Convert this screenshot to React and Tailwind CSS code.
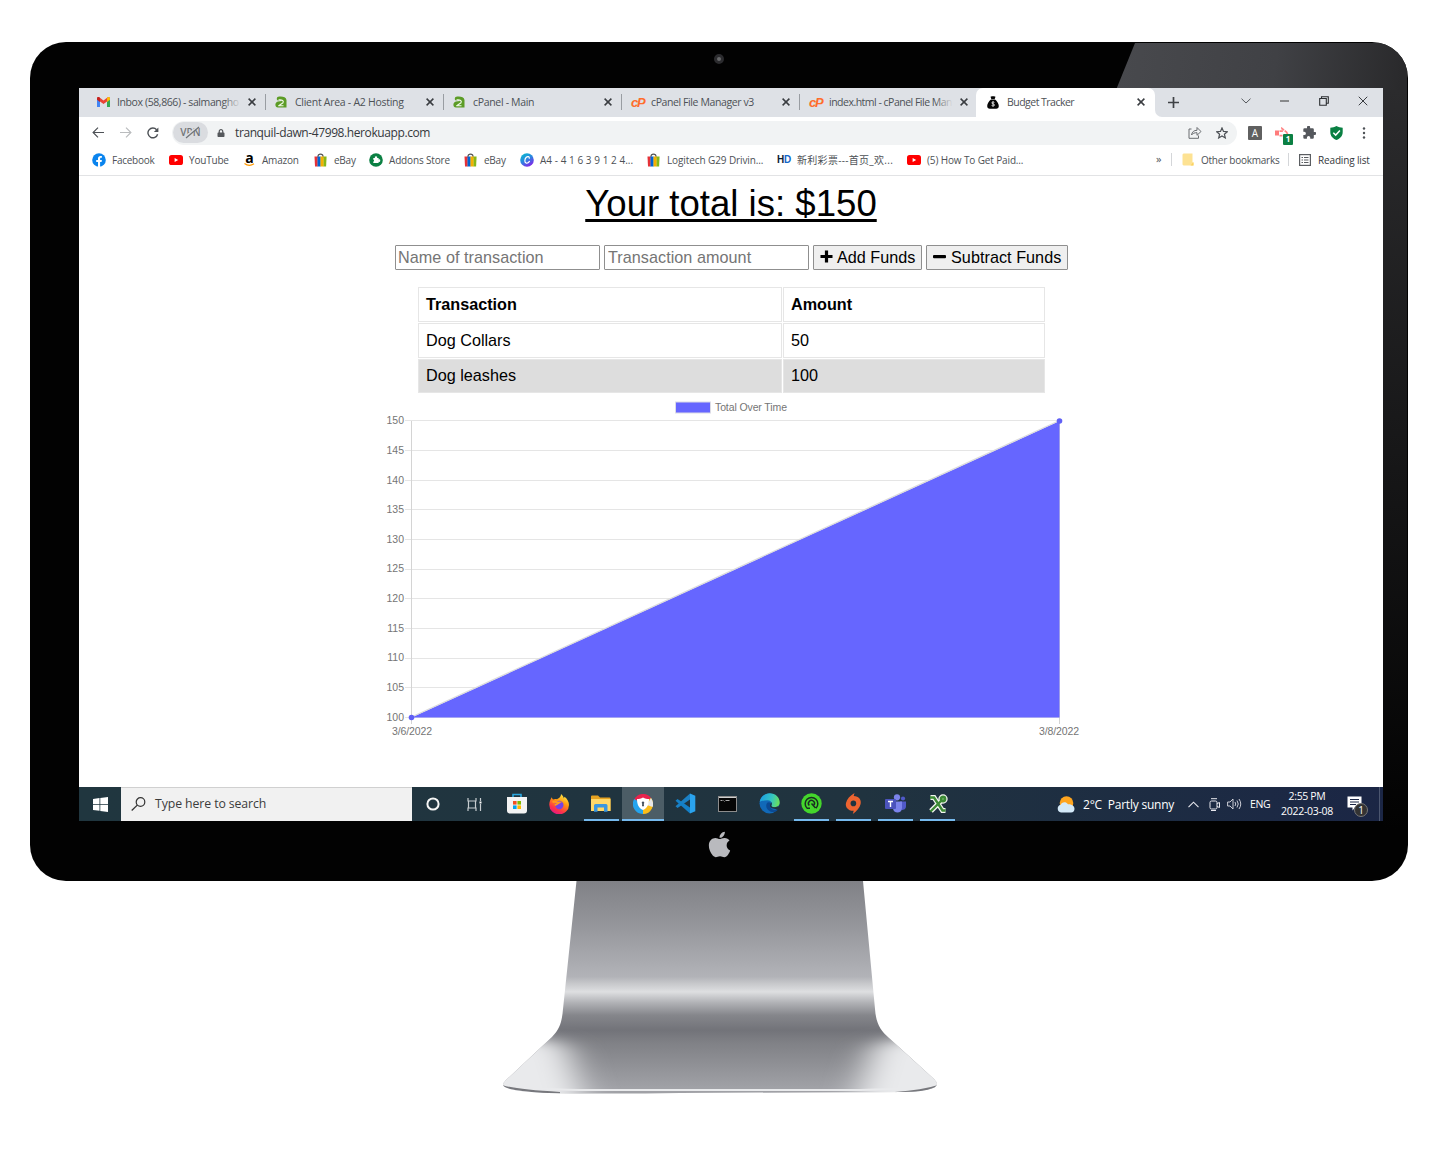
import React from "react";
import { FaApple, FaLock } from "react-icons/fa";

const ui = "font-['Open_Sans','Noto_Sans_CJK_SC',sans-serif]";

/* ---------- favicons ---------- */
const Gmail = () => (
  <svg width="13" height="10" viewBox="0 0 13 10">
    <path d="M0 1.3V10h3V4z" fill="#4285f4" />
    <path d="M13 1.3V10h-3V4z" fill="#34a853" />
    <path d="M0 1.5C0 0 1.6-.4 2.6.5L6.5 3.6 10.4.5C11.4-.4 13 0 13 1.5L10 4.4 6.5 7 3 4.4z" fill="#ea4335" />
    <path d="M10 1l.9-.7c1-.7 2.1 0 2.1 1.2v1.2l-3 2.2z" fill="#fbbc04" />
    <path d="M3 1L2.1.3C1.1-.4 0 .3 0 1.5v1.2l3 2.2z" fill="#c5221f" />
  </svg>
);
const A2 = () => (
  <svg width="12" height="13" viewBox="0 0 12 13">
    <path d="M2.5 1C6 0 11 .5 11.5 4v7.5H3C-.5 11.5-.5 6 3 5.4L7 5c0-1.4-2-1.3-4.2-.6C1.500 4 1.500 2 2.500 1z" fill="#5c9c26" />
    <path d="M3.300 10L8 6.800C9 5 7.500 3.300 3.600 3.900M3.300 9.800h5.200" fill="none" stroke="#eef7e4" strokeWidth="1.100" />
  </svg>
);
const Cp = () => (
  <span className="font-['Liberation_Sans',sans-serif] text-[13px] font-bold italic leading-none tracking-[-1.2px] text-[#ff6c2c]">cP</span>
);
const MoneyBag = () => (
  <svg width="12" height="13" viewBox="0 0 12 13">
    <path d="M3.500.7L5 .2h2L8.500.7 7.700 3H4.300zM4 3.400h4c2 1.600 3.800 4 3.800 6.600 0 1.900-1 2.700-2.600 2.700H2.800C1.200 12.700.2 11.900.2 10 .2 7.400 2 5 4 3.400z" fill="#050505" />
    <path d="M7.400 6.400c-.8-.7-2.600-.5-2.600.5C4.800 8.200 7.500 7.600 7.500 9c0 1.200-2 1.200-2.900.5M6 5.300v5.200" stroke="#fff" strokeWidth=".8" fill="none" />
  </svg>
);
const Facebook = () => (
  <svg width="14" height="14" viewBox="0 0 14 14">
    <circle cx="7" cy="7" r="6.800" fill="#0a84ee" />
    <path d="M6 14V9H4.200V7H6V5.600C6 3.800 7 2.900 8.500 2.900l1.400.1v1.700h-.8c-.8 0-1 .5-1 1V7h1.800l-.3 2H8.100v5z" fill="#fff" />
  </svg>
);
const YouTube = () => (
  <svg width="14" height="10" viewBox="0 0 14 10">
    <rect width="14" height="10" rx="2.600" fill="#f00" />
    <path d="M5.600 2.900v4.200L9.200 5z" fill="#fff" />
  </svg>
);
const Bag = () => (
  <svg width="13" height="14" viewBox="0 0 13 14">
    <path d="M4 5V3.200C4 .4 9 .4 9 3.200V5" stroke="#555" strokeWidth="1.100" fill="none" />
    <path d="M.5 3.500h3.200V13.500H1z" fill="#e53238" />
    <path d="M3.500 3.500h3.200v10H3.500z" fill="#0064d2" />
    <path d="M6.500 3.500h3.300v10H6.500z" fill="#f5af02" />
    <path d="M9.600 3.500h3l-.5 10H9.600z" fill="#86b817" />
  </svg>
);
const Addons = () => (
  <svg width="14" height="14" viewBox="0 0 14 14">
    <circle cx="7" cy="7" r="6.800" fill="#0b8043" />
    <path d="M4.300 5h1.600a1.200 1.200 0 1 1 2.200 0h1.500v1.500a1.200 1.200 0 1 1 0 2.200v1.300H4.300V8.700a1.200 1.200 0 0 0 0-2.200z" fill="#fff" />
  </svg>
);
const Canva = () => (
  <svg width="14" height="14" viewBox="0 0 14 14">
    <defs>
      <linearGradient id="canva" x1="0" y1="0" x2=".6" y2="1">
        <stop offset="0" stopColor="#00c4cc" />
        <stop offset=".55" stopColor="#2b84e0" />
        <stop offset="1" stopColor="#7d2ae8" />
      </linearGradient>
    </defs>
    <circle cx="7" cy="7" r="6.800" fill="url(#canva)" />
    <path d="M9.300 5.200C9.500 3.500 7.700 3 6.300 4.300 4.600 5.900 4.300 9.300 6 10c1.200.5 2.600-.4 3.400-1.600" fill="none" stroke="#fff" strokeWidth="1.200" strokeLinecap="round" />
  </svg>
);
const AmazonIcon = () => (
  <span className="flex flex-col items-center">
    <span className="h-[9px] text-[14px] font-bold leading-[7px] text-black">a</span>
    <svg width="11" height="3" viewBox="0 0 11 3"><path d="M.5.5C3.500 2.700 7 2.700 10 .8" stroke="#f90" strokeWidth="1.200" fill="none" /></svg>
  </span>
);
const HD = () => (
  <span className="font-['Liberation_Sans',sans-serif] text-[10px] font-bold leading-none tracking-[-0.2px] text-[#0b1c33]">
    H<span className="text-[#1466c8]">D</span>
  </span>
);

const Cross = ({ s = 8, w = 1.5 }) => (
  <svg width={s} height={s} viewBox="0 0 8 8"><path d="M.6.6l6.800 6.800M7.400.6L.6 7.400" stroke="#3a3d41" strokeWidth={w} /></svg>
);

/* ---------- browser chrome ---------- */
function Tab({ icon, label, text, fade, last }) {
  return (
    <div className="flex h-[29px] w-[178px] shrink-0 items-center pb-[1px] pl-[9px]">
      <span className="flex w-[20px] shrink-0 items-center">{icon}</span>
      <span className="relative w-[124px] shrink-0 whitespace-nowrap">
        <span className={`block text-[10.5px] leading-[16px] text-[#4d5156] ${text}`}>{label}</span>
        {fade && <span className="absolute right-0 top-0 h-4 w-[18px] bg-gradient-to-r from-[#dee1e6]/0 to-[#dee1e6]" />}
      </span>
      <span className="ml-[7px] flex w-[8px] shrink-0"><Cross /></span>
      {!last && <span className="ml-[9px] h-4 w-px shrink-0 bg-[#999da2]" />}
    </div>
  );
}

function Tabs() {
  return (
    <div className="flex h-[29px] bg-[#dee1e6]">
      <div className="w-[9px] shrink-0" />
      <Tab icon={<Gmail />} label="Inbox (58,866) - salmangho" text="tracking-[-0.4px]" fade />
      <Tab icon={<A2 />} label="Client Area - A2 Hosting" text="tracking-[-0.27px]" />
      <Tab icon={<A2 />} label="cPanel - Main" text="tracking-[-0.32px]" />
      <Tab icon={<Cp />} label="cPanel File Manager v3" text="tracking-[-0.4px]" />
      <Tab icon={<Cp />} label="index.html - cPanel File Man" text="tracking-[-0.5px]" fade last />
      <div className="-ml-[2px] flex h-[29px] w-[179px] shrink-0 items-center rounded-t-[7px] bg-white pb-[1px] pl-[11px]">
        <MoneyBag />
        <span className="ml-[8px] w-[130px] shrink-0 text-[10.5px] leading-[16px] tracking-[-0.5px] text-[#4d5156]"><span className="tracking-[-0.52px]">Budget Tracker</span></span>
        <Cross />
      </div>
      <div className="flex flex-1 bg-white">
        <div className="flex flex-1 items-center rounded-bl-[7px] bg-[#dee1e6] pl-[13px]">
          <svg width="11" height="11" viewBox="0 0 11 11"><path d="M5.500 0v11M0 5.500h11" stroke="#3f4246" strokeWidth="1.700" /></svg>
          <div className="mb-[4px] ml-[62px] flex items-center">
            <svg width="10" height="6" viewBox="0 0 10 6"><path d="M.5.7L5 5 9.500.7" stroke="#55585c" fill="none" /></svg>
            <svg className="ml-[29px]" width="9" height="2"><path d="M0 1h9" stroke="#333" /></svg>
            <svg className="ml-[30px]" width="10" height="10" viewBox="0 0 10 10"><path d="M.7 2.500h6.600v6.800H.7zM2.500 2.300V.7h6.800v6.600H7.500" stroke="#2b2d30" strokeWidth="1.100" fill="none" /></svg>
            <span className="ml-[29px] flex"><Cross s={10} w={0.8} /></span>
          </div>
        </div>
      </div>
    </div>
  );
}

function Toolbar() {
  return (
    <div className="flex h-[31px] items-center bg-white pl-[13px]">
      <svg width="12" height="11" viewBox="0 0 12 11"><path d="M12 5.500H1.200M6 .6L1.100 5.500 6 10.400" stroke="#4d5156" strokeWidth="1.200" fill="none" /></svg>
      <svg className="ml-[16px]" width="12" height="11" viewBox="0 0 12 11"><path d="M0 5.500h10.800M6 .6l4.900 4.900L6 10.400" stroke="#babcbe" strokeWidth="1.200" fill="none" /></svg>
      <svg className="ml-[15px]" width="12" height="12" viewBox="0 0 12 12"><path d="M10.600 7.200A4.900 4.900 0 1 1 9.600 2.700" stroke="#4d5156" strokeWidth="1.400" fill="none" /><path d="M11.400.4v4.500H6.900z" fill="#4d5156" /></svg>
      <div className="ml-[13px] flex h-[24px] w-[1065px] items-center rounded-full bg-[#f1f3f4]">
        <span className="relative ml-[1px] flex h-[21px] w-[35px] items-center justify-center rounded-full bg-[#dadce0] text-[10px] font-semibold tracking-[0.1px] text-[#707478]">
          VPN
          <svg className="absolute left-[9px] top-[3px]" width="18" height="14"><path d="M3 12L16 1.500" stroke="#dadce0" strokeWidth="2" /><path d="M4 13L17 2" stroke="#707478" strokeWidth="1.200" /></svg>
        </span>
        <FaLock className="ml-[9px]" size={8} color="#55585c" />
        <span className="ml-[10px] w-[953px] text-[12px] leading-4 tracking-[-0.4px] text-[#35383c]">tranquil-dawn-47998.herokuapp.com</span>
        <svg className="shrink-0" width="14" height="13" viewBox="0 0 14 13"><path d="M3.500 3H1v9.300h9.500V9.500M3.500 9C4 5.800 6 4.300 9 4.300V1.500l4 4-4 3.800V6.700C6.500 6.700 4.800 7.200 3.500 9z" stroke="#6a6d71" fill="none" /></svg>
        <svg className="ml-[14px] shrink-0" width="12" height="12" viewBox="0 0 12 12"><path d="M6 .9l1.500 3.500 3.800.3-2.900 2.500.9 3.700L6 8.900 2.700 10.900l.9-3.700L.7 4.700l3.800-.3z" stroke="#4d5156" strokeWidth="1.200" fill="none" /></svg>
      </div>
      <span className="ml-[11px] flex h-[14px] w-[14px] items-center justify-center rounded-[1px] bg-[#606060] text-[10px] leading-none text-white">A</span>
      <span className="relative ml-[13px] h-[16px] w-[19px]">
        <svg className="absolute left-0 top-[2px]" width="15" height="13" viewBox="0 0 15 13"><path d="M0 3.500h4v5H0z" fill="#ff7b7b" /><path d="M4.500 4.200h2.500V1.500l6 4.800-4.500 3.500M4.500 8.600h3" fill="none" stroke="#ff8585" strokeWidth="1.700" strokeDasharray="3.500 .8" /></svg>
        <span className="absolute left-[8px] top-[9px] flex h-[11px] w-[10px] items-center justify-center rounded-[1px] bg-[#0b8043] text-[8px] font-bold leading-none text-white">1</span>
      </span>
      <svg className="ml-[9px]" width="13" height="13" viewBox="1.500 1.500 21 21"><path d="M20.500 11H19V7a2 2 0 0 0-2-2h-4V3.500a2.500 2.500 0 0 0-5 0V5H4a2 2 0 0 0-2 2v3.800h1.500a2.700 2.700 0 0 1 0 5.400H2V20a2 2 0 0 0 2 2h3.800v-1.500a2.700 2.700 0 0 1 5.400 0V22H17a2 2 0 0 0 2-2v-4h1.500a2.500 2.500 0 0 0 0-5z" fill="#55585d" /></svg>
      <svg className="ml-[14px]" width="13" height="14" viewBox="0 0 13 14"><path d="M6.500 0c2 1.200 4 1.600 6.200 1.700V6c0 4-2.500 6.500-6.200 8C2.800 12.500.3 10 .3 6V1.700C2.500 1.600 4.500 1.200 6.500 0z" fill="#0a8043" /><path d="M3.300 6.700l2.400 2.400 4.200-4.500" stroke="#fff" strokeWidth="1.500" fill="none" /></svg>
      <svg className="ml-[19px]" width="4" height="12"><g fill="#4d5156"><circle cx="2" cy="1.500" r="1.200" /><circle cx="2" cy="6" r="1.200" /><circle cx="2" cy="10.500" r="1.200" /></g></svg>
    </div>
  );
}

function Bookmark({ icon, label, w, gap = "w-[20px]", text = "tracking-[-0.25px]" }) {
  return (
    <div className={`flex shrink-0 items-center ${w}`}>
      <span className={`flex shrink-0 items-center ${gap}`}>{icon}</span>
      <span className={`whitespace-nowrap text-[10px] leading-[14px] text-[#4d5156] ${text}`}>{label}</span>
    </div>
  );
}

function Bookmarks() {
  return (
    <div className="flex h-[28px] items-center border-b border-[#e2e3e5] bg-white pb-[4px] pl-[13px]">
      <Bookmark icon={<Facebook />} label="Facebook" w="w-[77px]" text="tracking-[-0.25px]" />
      <Bookmark icon={<YouTube />} label="YouTube" w="w-[75px]" text="tracking-[-0.2px]" />
      <Bookmark icon={<AmazonIcon />} label="Amazon" w="w-[70px]" gap="w-[18px]" text="tracking-[-0.2px]" />
      <Bookmark icon={<Bag />} label="eBay" w="w-[55px]" />
      <Bookmark icon={<Addons />} label="Addons Store" w="w-[95px]" text="tracking-[-0.16px]" />
      <Bookmark icon={<Bag />} label="eBay" w="w-[56px]" />
      <Bookmark icon={<Canva />} label="A4 - 4 1 6 3 9 1 2 4..." w="w-[127px]" text="tracking-[0.04px]" />
      <Bookmark icon={<Bag />} label="Logitech G29 Drivin..." w="w-[130px]" text="tracking-[-0.1px]" />
      <Bookmark icon={<HD />} label="新利彩票---首页_欢..." w="w-[130px]" text="tracking-[0.3px]" />
      <Bookmark icon={<YouTube />} label="(5) How To Get Paid..." w="w-[249px]" text="tracking-[-0.13px]" />
      <span className="w-[15px] pb-[2px] text-[11px] leading-none text-[#4d5156]">»</span>
      <span className="h-[13px] w-px bg-[#d4d6d9]" />
      <svg className="ml-[10px]" width="12" height="13" viewBox="0 0 12 13"><path d="M.5 1.500L1.500.500h9V9l1 1v2.500H1.500L.5 11.500z" fill="#fde293" /><path d="M11.500 9v3.500H8.500z" fill="#fbd25f" /></svg>
      <span className="ml-[7px] w-[87px] whitespace-nowrap pt-[1px] text-[10px] leading-[14px] tracking-[-0.24px] text-[#4d5156]">Other bookmarks</span>
      <span className="h-[13px] w-px bg-[#d4d6d9]" />
      <svg className="ml-[10px]" width="12" height="12" viewBox="0 0 12 12"><rect x=".6" y=".6" width="10.800" height="10.800" fill="none" stroke="#5a5d61" strokeWidth="1.200" /><path d="M2.500 3.500H4M5 3.500h4.500M2.500 6H4M5 6h4.500M2.500 8.500H4M5 8.500h4.500" stroke="#5a5d61" /></svg>
      <span className="ml-[7px] whitespace-nowrap pt-[1px] text-[10px] leading-[14px] tracking-[-0.15px] text-[#35383c]">Reading list</span>
    </div>
  );
}

/* ---------- budget tracker page ---------- */
const ticks = [150, 145, 140, 135, 130, 125, 120, 115, 110, 105, 100];

function Chart() {
  return (
    <svg className="ml-[301px] mt-[4px] block" width="705" height="350" viewBox="380 397 705 350" fontFamily="Liberation Sans, Arial, sans-serif" fontSize="10.5" fill="#757575">
      <rect x="675.500" y="402" width="35" height="11" fill="#6666ff" stroke="#dcdce6" />
      <text x="715" y="410.500" textLength="72">Total Over Time</text>
      {ticks.map((t, i) => (
        <g key={t}>
          <path d={`M405 ${Math.round(421.3 + i * 29.65) - 0.5}H1059.500`} stroke="#e5e5e5" />
          <text x="404" y={424.2 + i * 29.65} textAnchor="end">{t}</text>
        </g>
      ))}
      <path d="M411.500 421V724M1059.500 421V724" stroke="#d4d4d4" />
      <path d="M411.500 717.500L1059.500 421V717.500z" fill="#6666ff" />
      <path d="M411.500 717L1059.500 420.500" stroke="#dcdcdc" strokeWidth="1.300" />
      <circle cx="411.500" cy="717.500" r="2.800" fill="#6060f5" />
      <circle cx="1059.500" cy="421" r="2.800" fill="#6060f5" />
      <text x="392" y="735.200" textLength="40">3/6/2022</text>
      <text x="1039" y="735.200" textLength="40">3/8/2022</text>
    </svg>
  );
}

function Page() {
  const cell = "border border-[#e6e6e6] pl-[7px]";
  return (
    <main className="h-[611px] bg-white font-['Liberation_Sans',Arial,sans-serif] text-black">
      <h1 className="pt-[5px] text-center text-[36.6px] leading-[46px] underline decoration-[3px] underline-offset-[3px]">Your total is: $150</h1>
      <div className="ml-[316px] mt-[18px] flex text-[16.2px] leading-[23px]">
        <input className="h-[25px] w-[205px] rounded-[1px] border border-[#8f8f8f] px-[2px] tracking-[0.04px] placeholder:text-[#757575]" placeholder="Name of transaction" />
        <input className="ml-[4px] h-[25px] w-[205px] rounded-[1px] border border-[#8f8f8f] px-[3px] tracking-[0.04px] placeholder:text-[#757575]" placeholder="Transaction amount" />
        <button className="ml-[4px] flex h-[25px] w-[109px] items-center whitespace-nowrap rounded-[1px] border border-[#8f8f8f] bg-[#efefef] pl-[6px]">
          <svg className="mb-[2px] mr-[4px]" width="13" height="13"><path d="M6.500.5v12M.5 6.500h12" stroke="#000" strokeWidth="3.200" /></svg>Add Funds
        </button>
        <button className="ml-[4px] flex h-[25px] w-[142px] items-center whitespace-nowrap rounded-[1px] border border-[#8f8f8f] bg-[#efefef] pl-[6px] tracking-[0.04px]">
          <svg className="mb-[2px] mr-[5px]" width="13" height="13"><rect y="5" width="13" height="3.300" rx="1" /></svg>Subtract Funds
        </button>
      </div>
      <div className="ml-[339px] mt-[17px] grid w-[627px] grid-cols-[364px_262px] gap-x-[1px] gap-y-[1px] text-[16.2px] leading-[33px]">
        <div className={`${cell} font-bold`}>Transaction</div>
        <div className={`${cell} font-bold`}>Amount</div>
        <div className={cell}>Dog Collars</div>
        <div className={cell}>50</div>
        <div className={`${cell} h-[34px] bg-[#dddddd] leading-[31px]`}>Dog leashes</div>
        <div className={`${cell} h-[34px] bg-[#dddddd] leading-[31px]`}>100</div>
      </div>
      <Chart />
    </main>
  );
}

/* ---------- taskbar ---------- */
const Store = () => (
  <svg width="20" height="21" viewBox="0 0 20 21">
    <path d="M6 5V1.500h8V5" stroke="#2aa7df" strokeWidth="1.600" fill="none" />
    <path d="M0 4h20v13.500a3 3 0 0 1-3 3H3a3 3 0 0 1-3-3z" fill="#f3f3f3" />
    <path d="M6 8h3.600v3.600H6z" fill="#f25022" /><path d="M10.400 8H14v3.600h-3.600z" fill="#7fba00" />
    <path d="M6 12.400h3.600V16H6z" fill="#00a4ef" /><path d="M10.400 12.400H14V16h-3.600z" fill="#ffb900" />
  </svg>
);
const Firefox = () => (
  <svg width="20" height="20" viewBox="0 0 20 20">
    <defs><linearGradient id="ff" x1=".8" y1="0" x2=".3" y2="1"><stop offset="0" stopColor="#fff44f" /><stop offset=".4" stopColor="#ff980e" /><stop offset=".75" stopColor="#ff3647" /><stop offset="1" stopColor="#e31587" /></linearGradient></defs>
    <path d="M12 0c2 1.500 2.500 3 3 4.500 0-1 .2-1.500.6-1.800C18.500 5 20 8 20 11a9.800 9.300 0 0 1-19.700 0C.1 8 1.500 5 2.800 3.200 3 4.300 3.400 5 4 5.400 5 4.800 7 4.700 8 5.200 9 4.500 12 3.500 12 0z" fill="url(#ff)" />
    <circle cx="10.300" cy="11" r="4.200" fill="#7542e5" />
    <path d="M3.500 8c3-1 4 .5 6.500.6-1.600 1-2 2.100-4.200 2.300" fill="none" stroke="#ff9a1f" strokeWidth="2" />
  </svg>
);
const Explorer = () => (
  <svg width="20" height="17" viewBox="0 0 20 17">
    <path d="M0 1.500A1 1 0 0 1 1 .500h6L9 2.500h9.500a1 1 0 0 1 1 1V16H0z" fill="#e7a321" />
    <path d="M0 4h19.500v12H0z" fill="#ffd869" />
    <path d="M3 16.800v-6.300A1.500 1.500 0 0 1 4.500 9h10.500a1.500 1.500 0 0 1 1.500 1.500v6.300H13V12.500H6.500v4.300z" fill="#3a97e0" />
  </svg>
);
const Browser = () => (
  <svg width="20" height="20" viewBox="0 0 20 20">
    <path d="M10 10L1 5.500A10 10 0 0 1 18 4z" fill="#e9234c" />
    <path d="M10 10L18 4a10 10 0 0 1-8 16z" fill="#fcbd18" />
    <path d="M10 10v10A10 10 0 0 1 1.200 5z" fill="#25a4ee" />
    <path d="M18 4a10 10 0 0 1 1.600 9L14 11z" fill="#e7e7e7" />
    <path d="M10 3.500c2 1.200 4 1.500 6 1.600 0 5-1.500 9-6 11-4.500-2-6-6-6-11 2-.1 4-.4 6-1.600z" fill="#fff" />
    <path d="M10 7.500a1.300 1.300 0 0 1 .8 2.300l.2 2.500H9l.2-2.500A1.300 1.300 0 0 1 10 7.500z" fill="#46505c" />
  </svg>
);
const VsCode = () => (
  <svg width="21" height="21" viewBox="0 0 21 21">
    <path d="M15 .5v6L2.500 15 .5 13.200z" fill="#1b80c4" />
    <path d="M15 20.500v-6L2.500 6 .5 7.800z" fill="#1480c8" />
    <path d="M15 .5l5.300 2.300v15.400L15 20.500z" fill="#2aa3ee" />
  </svg>
);
const Cmd = () => (
  <svg width="19" height="16" viewBox="0 0 19 16">
    <rect x=".5" y=".5" width="18" height="15" fill="#050505" stroke="#8c8c8c" />
    <path d="M1 1.500h17" stroke="#cfcfcf" />
    <path d="M2.500 4.500h2M5.500 4.500l1 1M7.500 4.500h4" stroke="#aaa" strokeWidth="1" />
  </svg>
);
const Edge = () => (
  <svg width="21" height="21" viewBox="0 0 21 21">
    <defs>
      <linearGradient id="edge1" x1="0" y1=".3" x2="1" y2=".5"><stop offset="0" stopColor="#1b9de2" /><stop offset=".6" stopColor="#35c5c0" /><stop offset="1" stopColor="#6be05a" /></linearGradient>
    </defs>
    <circle cx="10.500" cy="10.500" r="10" fill="#1169b8" />
    <path d="M21 13l-1.500 4.500L14 15z" fill="#20333f" />
    <path d="M.7 9C1.500 3.500 6 .3 10.800.3c5.700 0 9.900 4.200 9.900 9 0 3.200-2.400 5-5 5-2.500 0-3.700-.9-3.200-1.800 1.300-2-.1-5.200-4.100-5.200C5 7.300 1.800 8 .7 9z" fill="url(#edge1)" />
    <path d="M8 10c-2 3 0 8 5 9 2 .3 4.500-.5 6-2.600-3 1.400-7.500.6-8-3.900-.1-1.100.4-1.800.8-2.200-1-1.500-3-1.500-3.800-.3z" fill="#0b4a94" />
    <path d="M12.200 9.300c1.500 2-.6 3 .6 4.200 1.400 1.200 5 .8 6.500-.8-1.500 3.500-6.300 3.600-7.900 1.400-.8-1.200-.3-2.800.2-3.600z" fill="#20343f" />
  </svg>
);
const Razer = () => (
  <svg width="21" height="21" viewBox="0 0 21 21">
    <circle cx="10.500" cy="10.500" r="10.200" fill="#44d62c" />
    <path d="M6 15.200a6.300 6.300 0 1 1 9 0M8.300 12.500a3 3 0 1 1 4.700-.500M10.500 10.500l4 4.500M6 15.200h3" fill="none" stroke="#1a2d22" strokeWidth="1.500" />
  </svg>
);
const Origin = () => (
  <svg width="17" height="21" viewBox="0 0 17 21">
    <path d="M9.500 0L8.700 3C14 3 16.600 7 15.600 11c-.8 3.800-3.800 7-7.800 10l.9-3.200C3 18 0 14 1 10c.8-4 4-7.200 8.500-10z" fill="#ee6430" />
    <circle cx="8.400" cy="10.400" r="2.800" fill="#203440" />
  </svg>
);
const Teams = () => (
  <svg width="21" height="19" viewBox="0 0 21 19">
    <circle cx="12" cy="3.300" r="3.100" fill="#7b83eb" /><circle cx="18" cy="4.500" r="2.100" fill="#5059c9" />
    <path d="M15 7.500h6V12c0 3-2 4-4.500 4z" fill="#5059c9" />
    <path d="M8 7.500h9V14c0 6-9 6-9 0z" fill="#7b83eb" />
    <rect y="5" width="11" height="10" rx="1" fill="#4b53bc" />
    <path d="M3 7.500h5M5.500 7.500v5.500" stroke="#fff" strokeWidth="1.400" />
  </svg>
);
const KeyCross = () => (
  <svg width="20" height="20" viewBox="0 0 20 20" fill="none">
    <g stroke="#f2f5ef" strokeWidth="5"><path d="M2.500 3.500h3.500l8.500 13h3M3 17L13.500 6.500" /><circle cx="15" cy="5" r="2.200" /></g>
    <g stroke="#3c8a35" strokeWidth="2.400"><path d="M2 3.500h4l8.500 13h3M2.500 17.500L13.500 6.500" /><circle cx="15" cy="5" r="2.200" fill="#6bb05f" /></g>
  </svg>
);

function TaskIcon({ icon, open, active }) {
  return (
    <span className={`flex h-[34px] w-[42.1px] shrink-0 flex-col items-center ${active ? "bg-[#4c5d66]" : ""}`}>
      <span className="flex h-[32px] items-center pt-[1px]">{icon}</span>
      {open && <span className={`h-[2px] bg-[#76b9ed] ${active ? "w-full" : "w-[35px]"}`} />}
    </span>
  );
}

function Taskbar() {
  return (
    <div className="flex h-[34px] items-center bg-gradient-to-r from-[#20363f] via-[#20333f] via-60% to-[#1b2645]">
      <span className="flex w-[42px] shrink-0 justify-center">
        <svg width="15" height="15" viewBox="0 0 15 15" fill="#fff"><path d="M0 2l6.500-1v6H0zM7.300.9L15 0v7H7.300zM0 7.800h6.500v6L0 13zM7.300 7.800H15V15l-7.700-1z" /></svg>
      </span>
      <span className="flex h-[34px] w-[291px] shrink-0 items-center border-t border-[#d0d0d0] bg-[#f1f1f1] pl-[10px]">
        <svg className="mb-[1px]" width="15" height="14" viewBox="0 0 15 14"><circle cx="9.500" cy="5" r="4.300" fill="none" stroke="#333" strokeWidth="1.200" /><path d="M6.300 8.100L.7 13.500" stroke="#333" strokeWidth="1.300" /></svg>
        <span className="ml-[9px] whitespace-nowrap text-[12.3px] tracking-[-0.1px] text-[#3c3c3c]">Type here to search</span>
      </span>
      <span className="flex w-[42px] shrink-0 justify-center"><svg width="14" height="14"><circle cx="7" cy="7" r="5.600" fill="none" stroke="#f5f5f5" strokeWidth="2" /></svg></span>
      <span className="mr-[1px] flex w-[41px] shrink-0 justify-center">
        <svg width="15" height="13" viewBox="0 0 15 13"><path d="M1 0v3h8V0M1 13v-3h8v3M1.500 3v7M8.500 3v7M13.500 0v3M13.500 6v7" stroke="#c6cccf" strokeWidth="1.200" fill="none" /><path d="M12.500 4.500h2" stroke="#fff" strokeWidth="2" /></svg>
      </span>
      <TaskIcon icon={<Store />} />
      <TaskIcon icon={<Firefox />} />
      <TaskIcon icon={<Explorer />} open />
      <TaskIcon icon={<Browser />} open active />
      <TaskIcon icon={<VsCode />} />
      <TaskIcon icon={<Cmd />} />
      <TaskIcon icon={<Edge />} />
      <TaskIcon icon={<Razer />} open />
      <TaskIcon icon={<Origin />} open />
      <TaskIcon icon={<Teams />} open />
      <TaskIcon icon={<KeyCross />} open />
      <div className="ml-auto flex h-full items-center text-white">
        <svg width="18" height="17" viewBox="0 0 18 17"><circle cx="9.500" cy="7" r="6.800" fill="#ffa51f" /><path d="M4 16.500a4 4 0 0 1-.3-7.800C4.500 6 9 5 11 8.300c4-.3 6.500 2 6.500 4.500a3.700 3.700 0 0 1-3.500 3.700z" fill="#d5eaf9" /></svg>
        <span className="ml-[8px] w-[105px] whitespace-pre pt-[2px] text-[12px] tracking-[-0.22px]">2°C  Partly sunny</span>
        <svg width="11" height="7" viewBox="0 0 11 7"><path d="M.5 6.200l5-5 5 5" stroke="#e8e8ee" strokeWidth="1.100" fill="none" /></svg>
        <svg className="ml-[10px]" width="12" height="13" viewBox="0 0 12 13"><rect x="1" y="3" width="7" height="8" rx="1.500" fill="none" stroke="#e8e8ee" /><path d="M8 5.500l2.500-1v5L8 8.500M2 .7h6M2 12.500h5" stroke="#e8e8ee" fill="none" /></svg>
        <svg className="ml-[6px]" width="15" height="12" viewBox="0 0 15 12"><path d="M.6 4h2.400L6 1v10L3 8H.6zM8 4q1.500 2 0 4M10 2.500q2.500 3.500 0 7M12 1q3.500 5 0 10" stroke="#dcdce4" strokeWidth=".9" fill="none" /></svg>
        <span className="ml-[8px] w-[22px] pt-[1px] text-[10.5px] tracking-[-0.4px]">ENG</span>
        <span className="ml-[2px] flex w-[66px] flex-col text-center text-[10.5px] leading-[15px] tracking-[-0.35px]"><span>2:55 PM</span><span className="tracking-[-0.3px]">2022-03-08</span></span>
        <span className="relative ml-[7px] mt-[3px] h-[20px] w-[22px]">
          <svg width="15" height="15" viewBox="0 0 15 15"><path d="M.5.500h14v11H8L5.500 14.500v-3h-5z" fill="#fff" /><path d="M3 3.500h9M3 6h9M3 8.500h6" stroke="#1b2645" /></svg>
          <span className="absolute left-[7px] top-[7px] flex h-[14px] w-[14px] items-center justify-center rounded-full border border-[#777] bg-[#333] text-[10px] leading-none">1</span>
        </span>
        <span className="ml-[10px] h-full w-px bg-[#4b566f]" />
        <span className="w-[3px]" />
      </div>
    </div>
  );
}

/* ---------- monitor ---------- */
function Stand() {
  const outline = "M76.500 0H363L375 128C376 142 380 149 389 157L434 198Q440 204 433 207Q424 211 402 211L180 212Q110 213 48 212Q14 211 5 206Q1 204 6 199L52 156C60 148 62 140 63 128z";
  return (
    <svg className="ml-[500px] block" width="440" height="216" viewBox="0 0 440 216">
      <defs>
        <linearGradient id="metal" gradientUnits="userSpaceOnUse" x1="0" y1="0" x2="0" y2="213">
          <stop offset="0" stopColor="#808186" />
          <stop offset=".2" stopColor="#94959a" />
          <stop offset=".45" stopColor="#b2b3b8" />
          <stop offset=".48" stopColor="#c6c7ca" />
          <stop offset=".52" stopColor="#dedfe1" />
          <stop offset=".57" stopColor="#b2b3b7" />
          <stop offset=".63" stopColor="#85868b" />
          <stop offset=".7" stopColor="#727379" />
          <stop offset=".76" stopColor="#808186" />
          <stop offset=".84" stopColor="#8c8d92" />
          <stop offset=".97" stopColor="#a0a1a6" />
        </linearGradient>
        <filter id="soft" x="-30%" y="-30%" width="160%" height="160%"><feGaussianBlur stdDeviation="17 6" /></filter>
        <clipPath id="standShape"><path d={outline} /></clipPath>
      </defs>
      <path d={outline} fill="url(#metal)" />
      <g clipPath="url(#standShape)">
        <g filter="url(#soft)" fill="#e9eaec">
          <path d="M50 158L68 168 90 240H-60V158z" />
          <path d="M390 158L372 168 350 240H500V158z" />
        </g>
        <path d="M3 203Q18 208 80 209H360Q424 208 438 202" stroke="#e9eaec" strokeWidth="2" fill="none" />
        <path d="M2 205Q15 209.500 60 212M438 205Q424 210 395 212" stroke="#77787d" strokeWidth="2" fill="none" />
      </g>
    </svg>
  );
}

export default function App() {
  return (
    <div className={`h-[1164px] w-[1440px] overflow-hidden bg-white pt-[42px] ${ui}`}>
      <div className="relative ml-[30px] h-[839px] w-[1378px] overflow-hidden rounded-[36px] bg-[#020202]">
        <svg className="absolute left-0 top-0" width="1378" height="839" viewBox="30 42 1378 839">
          <defs>
            <linearGradient id="glare" gradientUnits="userSpaceOnUse" x1="1120" y1="60" x2="1400" y2="90"><stop offset="0" stopColor="#48494d" /><stop offset=".55" stopColor="#404145" /><stop offset="1" stopColor="#2a2a2c" /></linearGradient>
            <linearGradient id="side" x1="0" y1="0" x2="0" y2="1"><stop offset="0" stopColor="#2b2b2d" /><stop offset="1" stopColor="#020202" /></linearGradient>
          </defs>
          <path d="M1135 43H1407V90H1116z" fill="url(#glare)" />
          <path d="M1383 90H1407V830H1383z" fill="url(#side)" />
        </svg>
        <div className="relative flex h-[46px] justify-center pt-[12px]">
          <span className="h-[10px] w-[10px] rounded-full border-[3px] border-[#2b2b2e] bg-[#68696b]" />
        </div>
        <div className="relative ml-[49px] h-[733px] w-[1304px] overflow-hidden bg-white">
          <Tabs />
          <Toolbar />
          <Bookmarks />
          <Page />
          <Taskbar />
        </div>
        <div className="relative flex justify-center pt-[9px]"><FaApple size={29} color="#b9babe" /></div>
      </div>
      <Stand />
    </div>
  );
}
